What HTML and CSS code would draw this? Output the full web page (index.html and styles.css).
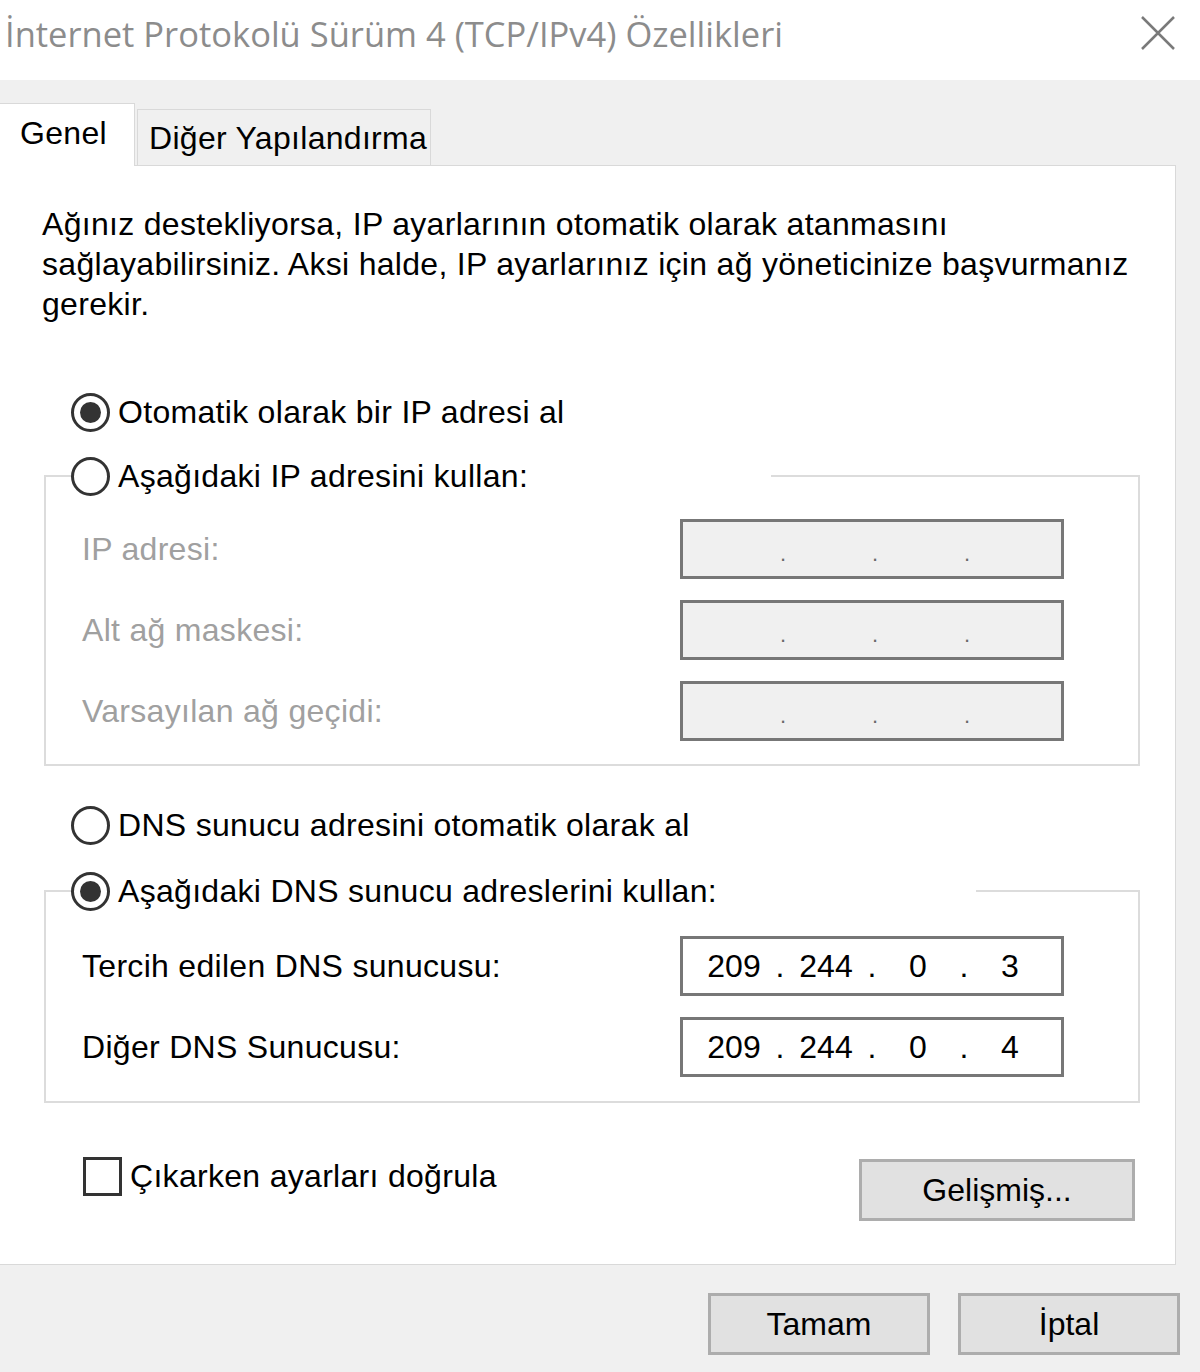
FILE: index.html
```html
<!DOCTYPE html>
<html lang="tr">
<head>
  <meta charset="UTF-8">
  <meta name="viewport" content="width=device-width, initial-scale=1.0">
  <title>İnternet Protokolü Sürüm 4 (TCP/IPv4) Özellikleri</title>
  <link rel="stylesheet" href="styles.css">
</head>
<body>
  <div class="titlebar">
    <span class="title">İnternet Protokolü Sürüm 4 (TCP/IPv4) Özellikleri</span>
    <svg class="close" width="36" height="36" viewBox="0 0 36 36">
      <path d="M2 2 L34 34 M34 2 L2 34" stroke="#7a7a7a" stroke-width="2.5" fill="none"/>
    </svg>
  </div>

  <div class="tabs">
    <div class="tab active">Genel</div>
    <div class="tab">Diğer Yapılandırma</div>
  </div>

  <div class="panel">
    <p class="intro">Ağınız destekliyorsa, IP ayarlarının otomatik olarak atanmasını sağlayabilirsiniz. Aksi halde, IP ayarlarınız için ağ yöneticinize başvurmanız gerekir.</p>

    <div class="option first"><span class="radio checked"></span>Otomatik olarak bir IP adresi al</div>

    <fieldset class="group">
      <legend class="legend-ip"><span class="radio"></span>Aşağıdaki IP adresini kullan:</legend>
      <div class="row disabled">
        <span>IP adresi:</span>
        <div class="ipbox"><span class="seg"></span><span class="dot">.</span><span class="seg"></span><span class="dot">.</span><span class="seg"></span><span class="dot">.</span><span class="seg"></span></div>
      </div>
      <div class="row disabled">
        <span>Alt ağ maskesi:</span>
        <div class="ipbox"><span class="seg"></span><span class="dot">.</span><span class="seg"></span><span class="dot">.</span><span class="seg"></span><span class="dot">.</span><span class="seg"></span></div>
      </div>
      <div class="row disabled">
        <span>Varsayılan ağ geçidi:</span>
        <div class="ipbox"><span class="seg"></span><span class="dot">.</span><span class="seg"></span><span class="dot">.</span><span class="seg"></span><span class="dot">.</span><span class="seg"></span></div>
      </div>
    </fieldset>

    <div class="option dns"><span class="radio"></span>DNS sunucu adresini otomatik olarak al</div>

    <fieldset class="group dns-group">
      <legend class="legend-dns"><span class="radio checked"></span>Aşağıdaki DNS sunucu adreslerini kullan:</legend>
      <div class="row">
        <span>Tercih edilen DNS sunucusu:</span>
        <div class="ipbox"><span class="seg">209</span><span class="dot">.</span><span class="seg">244</span><span class="dot">.</span><span class="seg">0</span><span class="dot">.</span><span class="seg">3</span></div>
      </div>
      <div class="row">
        <span>Diğer DNS Sunucusu:</span>
        <div class="ipbox"><span class="seg">209</span><span class="dot">.</span><span class="seg">244</span><span class="dot">.</span><span class="seg">0</span><span class="dot">.</span><span class="seg">4</span></div>
      </div>
    </fieldset>

    <div class="bottom-row">
      <div class="check"><span class="box"></span>Çıkarken ayarları doğrula</div>
      <button class="btn advanced">Gelişmiş...</button>
    </div>
  </div>

  <div class="actions">
    <button class="btn">Tamam</button>
    <button class="btn">İptal</button>
  </div>
</body>
</html>
```

FILE: styles.css
```css
body {
  margin: 0;
  background: #f0f0f0;
  font-family: "Liberation Sans", Arial, sans-serif;
  font-size: 32px;
  letter-spacing: 0.3px;
  color: #000;
}
.titlebar {
  height: 80px;
  background: #fff;
  display: flex;
  align-items: center;
  justify-content: space-between;
  padding: 0 24px 0 5px;
}
.title {
  font-family: "Open Sans", sans-serif;
  font-size: 34.5px;
  letter-spacing: 0;
  color: #8c8c8c;
  margin-top: -14px;
}
.close {
  margin-top: -14px;
}
.tabs {
  display: flex;
  align-items: flex-end;
  margin-top: 23px;
  height: 62px;
}
.tab {
  height: 56px;
  width: 294px;
  box-sizing: border-box;
  border: 1px solid #d9d9d9;
  border-bottom: none;
  background: #f0f0f0;
  padding-left: 11px;
  line-height: 56px;
  margin-left: 2px;
}
.tab.active {
  height: 63px;
  width: 135px;
  margin-left: 0;
  margin-bottom: -1px;
  background: #fff;
  border-left: none;
  padding-left: 20px;
  line-height: 58px;
  position: relative;
  z-index: 1;
}
.panel {
  width: 1176px;
  height: 1100px;
  box-sizing: border-box;
  background: #fff;
  border: 1px solid #d9d9d9;
  border-left: none;
  padding: 38px 35px 0 42px;
}
.intro {
  margin: 0;
  line-height: 40px;
  width: 1100px;
}
.option {
  display: flex;
  align-items: center;
  height: 40px;
  margin-left: 29px;
}
.option.first {
  margin-top: 68px;
}
.option.dns {
  margin-top: 39px;
}
.radio {
  width: 39px;
  height: 39px;
  box-sizing: border-box;
  border: 3px solid #333;
  border-radius: 50%;
  margin-right: 8px;
  display: inline-flex;
  align-items: center;
  justify-content: center;
  background: #fff;
}
.radio.checked::after {
  content: "";
  width: 21px;
  height: 21px;
  border-radius: 50%;
  background: #333;
}
.group {
  margin: 24px 0 0 2px;
  width: 1096px;
  box-sizing: border-box;
  border: 2px solid #dcdcdc;
  padding: 0 0 23px 36px;
}
.group legend {
  display: flex;
  align-items: center;
  height: 40px;
  padding: 0;
  margin-left: -11px;
}
.legend-ip {
  width: 700px;
}
.legend-dns {
  width: 905px;
}
.dns-group {
  margin-top: 26px;
  padding-bottom: 24px;
}
.row {
  display: flex;
  align-items: center;
  justify-content: space-between;
  width: 982px;
  margin-top: 21px;
}
.row:first-of-type {
  margin-top: 23px;
}
.dns-group .row:first-of-type {
  margin-top: 25px;
}
.disabled {
  color: #a0a0a0;
}
.ipbox {
  width: 384px;
  height: 60px;
  box-sizing: border-box;
  border: 3px solid #777;
  background: #fff;
  display: flex;
  align-items: center;
  padding-left: 15px;
  color: #000;
  letter-spacing: 0;
}
.disabled .ipbox {
  background: #f0f0f0;
  color: #6a6a6a;
  font-size: 22px;
  padding-top: 10px;
  padding-left: 18px;
}
.seg {
  width: 72px;
  text-align: center;
}
.dot {
  width: 20px;
  text-align: center;
}
.bottom-row {
  display: flex;
  justify-content: space-between;
  align-items: flex-start;
  margin-top: 53px;
  padding-left: 41px;
  padding-right: 5px;
}
.check {
  display: flex;
  align-items: center;
  height: 40px;
}
.box {
  width: 39px;
  height: 39px;
  box-sizing: border-box;
  border: 3px solid #333;
  margin-right: 8px;
}
.btn {
  font: inherit;
  color: #000;
  background: #e1e1e1;
  border: 3px solid #adadad;
  height: 62px;
  width: 222px;
  padding: 0;
}
.advanced {
  width: 276px;
  margin-top: 3px;
}
.actions {
  display: flex;
  justify-content: flex-end;
  gap: 28px;
  padding: 28px 20px 0 0;
}
```
